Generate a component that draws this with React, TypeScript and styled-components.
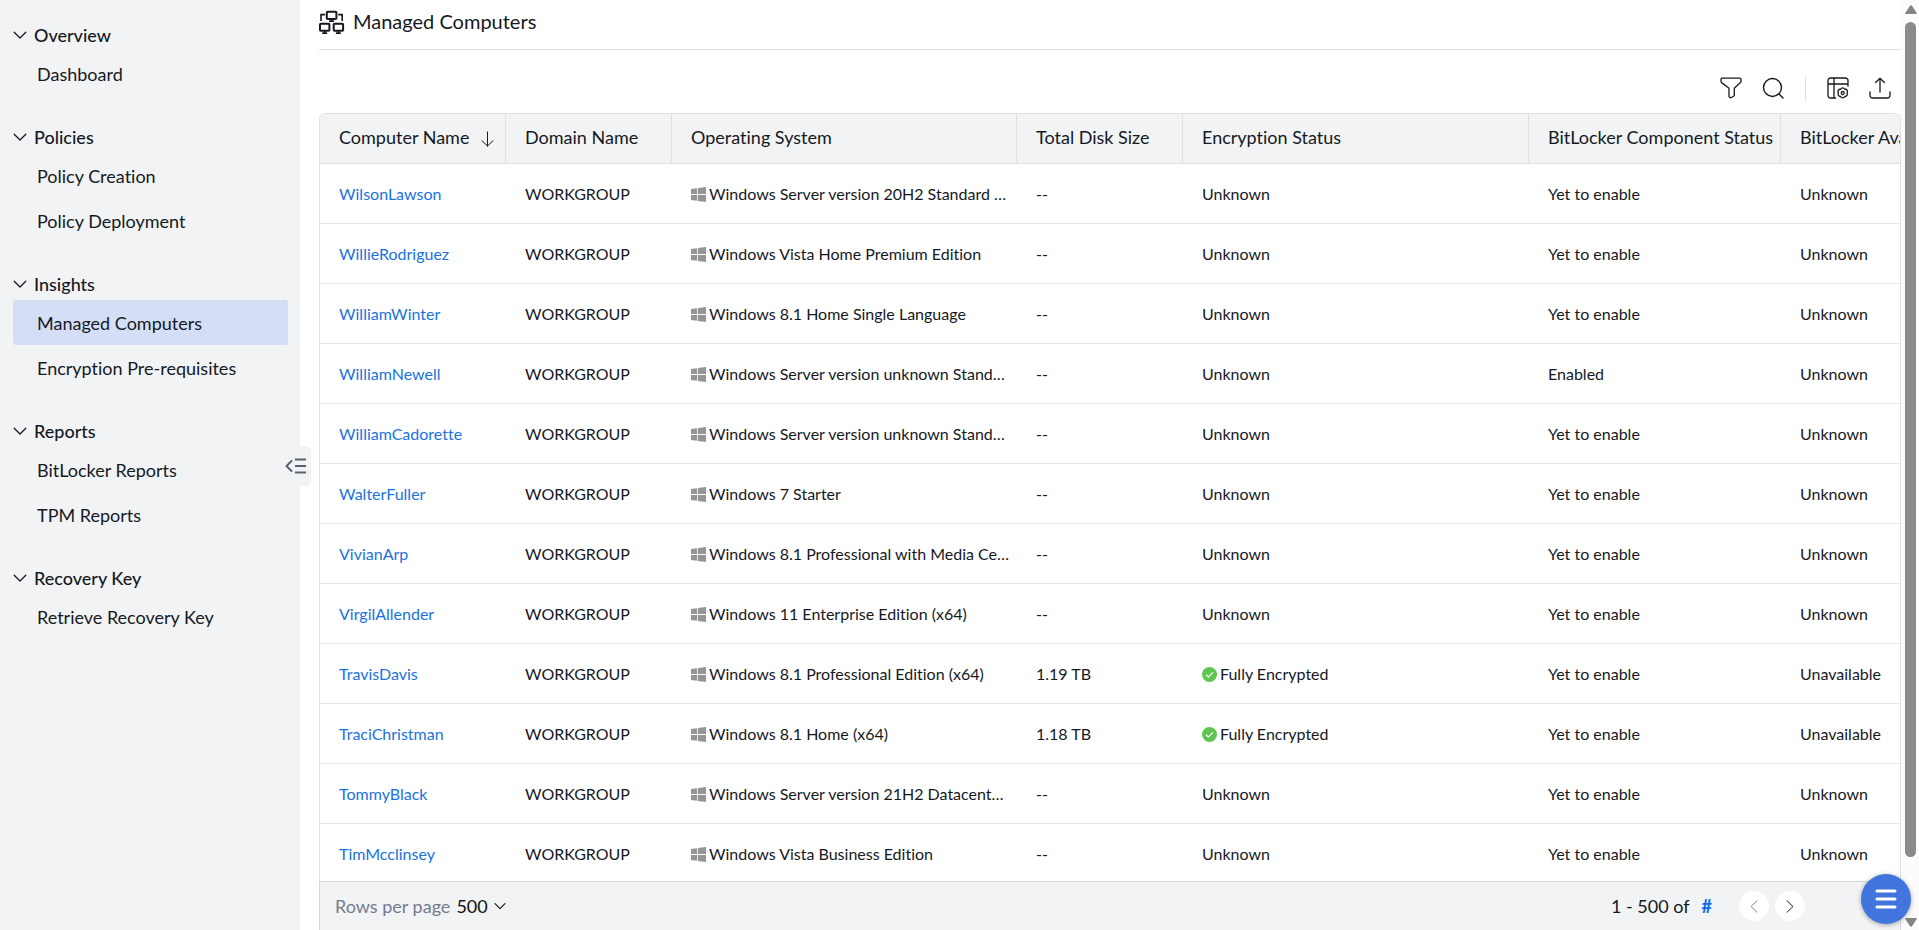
import React from "react";
import styled, { createGlobalStyle } from "styled-components";

const GlobalStyle = createGlobalStyle`
  *, *::before, *::after { box-sizing: border-box; }
  html, body, #root { height: 100%; }
  body {
    margin: 0;
    overflow: hidden;
    background: #fff;
    color: #16191f;
    font-family: Lato, "Open Sans", sans-serif;
    font-size: 18px;
    font-variant-ligatures: none;
    line-height: 24px;
  }
  a { color: inherit; text-decoration: none; }
  button, select { font: inherit; color: inherit; }
  svg { display: block; flex: none; }
`;

const Shell = styled.div`
  display: grid;
  grid-template-columns: 300px minmax(0, 1fr) 18px;
  height: 100vh;
  position: relative;
`;

/* Sidebar */

const Sidebar = styled.nav`
  position: relative;
  display: flex;
  flex-direction: column;
  gap: 24px;
  padding: 18px 12px 0 13px;
  background: #f1f3f5;
`;

const NavGroup = styled.section`
  display: flex;
  flex-direction: column;
`;

const NavHeading = styled.button`
  display: flex;
  align-items: center;
  gap: 7px;
  height: 33px;
  padding: 0;
  border: 0;
  background: none;
  font-weight: 500;
  text-align: left;
  cursor: pointer;
`;

const NavItem = styled.a<{ $active?: boolean }>`
  display: flex;
  align-items: center;
  height: 45px;
  padding-left: 24px;
  border-radius: 3px;
  background: ${(p) => (p.$active ? "#d4dff7" : "transparent")};
`;

const CollapseHandle = styled.button`
  position: absolute;
  top: 48%;
  right: -11px;
  display: flex;
  align-items: center;
  justify-content: center;
  width: 30px;
  height: 40px;
  padding: 0;
  border: 0;
  border-radius: 0 5px 5px 0;
  background: #f1f3f5;
  color: #5b6070;
  cursor: pointer;
`;

/* Main area */

const Main = styled.main`
  display: flex;
  flex-direction: column;
  min-width: 0;
  min-height: 0;
  padding-left: 19px;
`;

const TitleBar = styled.header`
  display: flex;
  flex: none;
  align-items: center;
  gap: 8px;
  height: 50px;
  padding-bottom: 6px;
  border-bottom: 1px solid #dfe1e4;
`;

const Title = styled.h1`
  margin: 0;
  padding-bottom: 2px;
  font-size: 20px;
  font-weight: 400;
  line-height: 24px;
`;

const Toolbar = styled.div`
  display: flex;
  flex: none;
  align-items: center;
  justify-content: flex-end;
  height: 63px;
  padding-top: 13px;
`;

const ToolButton = styled.button`
  display: grid;
  place-items: center;
  width: 42px;
  height: 32px;
  padding: 0;
  border: 0;
  background: none;
  cursor: pointer;
`;

const ToolDivider = styled.span`
  width: 1px;
  height: 25px;
  margin: 0 11px;
  background: #dcdfe3;
`;

const TableFrame = styled.div`
  flex: 1;
  min-height: 0;
  overflow: hidden;
  border: 1px solid #dfe2e5;
  border-bottom: 0;
  border-radius: 6px 6px 0 0;
`;

const Table = styled.table`
  width: 1741px;
  table-layout: fixed;
  border-collapse: separate;
  border-spacing: 0;
`;

const HeadCell = styled.th`
  height: 50px;
  padding: 0 0 3px 19px;
  border-right: 1px solid #dfe2e5;
  border-bottom: 1px solid #dfe2e5;
  background: #f1f3f5;
  font-weight: 400;
  text-align: left;
  white-space: nowrap;
`;

const HeadLabel = styled.span`
  display: flex;
  align-items: center;
  gap: 12px;
`;

const Cell = styled.td`
  height: 60px;
  padding: 0 7px 0 19px;
  border-bottom: 1px solid #e6e8ea;
  font-size: 16px;
`;

const CellContent = styled.span`
  display: flex;
  align-items: center;
  gap: 3px;
`;

const CellText = styled.span`
  overflow: hidden;
  text-overflow: ellipsis;
  white-space: nowrap;
`;

const ComputerLink = styled.a`
  color: #1a73e0;
`;

/* Footer */

const Footer = styled.footer`
  display: flex;
  flex: none;
  align-items: center;
  justify-content: space-between;
  height: 49px;
  padding: 0 95px 0 15px;
  border: 1px solid #d5d9dd;
  border-bottom: 0;
  background: #f1f3f5;
`;

const RowsPerPage = styled.label`
  display: flex;
  align-items: center;
  gap: 6px;
  color: #757b8c;
`;

const SelectWrap = styled.span`
  display: grid;
  align-items: center;
  color: #111;

  & > * { grid-area: 1 / 1; }
  & > svg { justify-self: end; pointer-events: none; }
`;

const PageSize = styled.select`
  width: 50px;
  padding: 0;
  border: 0;
  background: none;
  appearance: none;
`;

const Pager = styled.div`
  display: flex;
  align-items: center;
`;

const TotalLink = styled.a`
  margin: 0 27px 0 12px;
  color: #0b6bea;
  font-weight: 700;
`;

const PageButton = styled.button`
  display: grid;
  place-items: center;
  width: 30px;
  height: 30px;
  margin-right: 6px;
  padding: 0;
  border: 0;
  border-radius: 50%;
  background: #fff;
  color: #222;

  &:disabled { color: #858585; }
  &:last-child { margin-right: 0; }
`;

/* Window edge */

const ScrollTrack = styled.div`
  display: flex;
  flex-direction: column;
  align-items: center;
  gap: 8px;
  padding: 5px 0 3px 1px;
  background: #fcfcfc;
`;

const ScrollLane = styled.div`
  flex: 1;
  width: 11px;
`;

const ScrollThumb = styled.div`
  height: 94%;
  border-radius: 6px;
  background: #8b8b8b;
`;

const MenuButton = styled.button`
  position: absolute;
  right: 8px;
  bottom: 6px;
  display: grid;
  place-items: center;
  width: 50px;
  height: 50px;
  padding: 0;
  border: 0;
  border-radius: 50%;
  background: #4174dd;
  box-shadow: 0 1px 5px rgba(0, 0, 0, 0.35);
  cursor: pointer;
`;

/* Icons */

const stroke = { fill: "none", stroke: "currentColor", strokeLinecap: "round", strokeLinejoin: "round" } as const;

const ChevronDown = ({ size = 14 }: { size?: number }) => (
  <svg width={size} height={size} viewBox="0 0 14 14" {...stroke} strokeWidth="1.3">
    <path d="M1.2 4.2 7 10l5.8-5.8" />
  </svg>
);

const ComputersIcon = () => (
  <svg width="26" height="26" viewBox="0 0 26 26" {...stroke} strokeWidth="2">
    <rect x="7.800" y="2.700" width="9.600" height="7.300" rx=".8" />
    <rect x="1" y="14.700" width="9.400" height="7" rx=".8" />
    <rect x="14.700" y="14.700" width="9.400" height="7" rx=".8" />
    <path d="M12.600 10.500v1.500M10.800 12.200h3.600M5.700 22v2M3.900 24.200h3.600M19.400 22v2M17.600 24.200h3.600" strokeWidth="1.700" />
    <path d="M2 12V5.600h4M23.200 12V5.600h-4" strokeWidth="1.600" strokeLinecap="butt" strokeLinejoin="miter" />
  </svg>
);

const CollapseIcon = () => (
  <svg width="22" height="20" viewBox="0 0 22 20" {...stroke} strokeWidth="2">
    <path d="M6.500 5 1.500 10l5 5" />
    <path d="M10 3.500h11M10 10h11M10 16.500h11" strokeLinecap="butt" />
  </svg>
);

const FilterIcon = () => (
  <svg width="22" height="22" viewBox="0 0 22 22" {...stroke} strokeWidth="1.3">
    <path d="M2 1.200h18a1 1 0 0 1 1 1v2.300a1.500 1.500 0 0 1-.5 1.100l-5.700 5.100a1.500 1.500 0 0 0-.5 1.100v6.200a1.500 1.500 0 0 1-.8 1.300l-2.200 1.200a1.500 1.500 0 0 1-2.300-1.300v-7.400a1.500 1.500 0 0 0-.5-1.100L1.500 5.600A1.500 1.500 0 0 1 1 4.500V2.200a1 1 0 0 1 1-1z" />
  </svg>
);

const SearchIcon = () => (
  <svg width="22" height="22" viewBox="0 0 22 22" {...stroke} strokeWidth="1.4">
    <circle cx="10.500" cy="10.500" r="9" />
    <path d="m17 17 4 4" />
  </svg>
);

const ColumnsIcon = () => (
  <svg width="22" height="22" viewBox="0 0 22 22" {...stroke} strokeWidth="1.3">
    <path d="M8.500 21H3.500A2.500 2.500 0 0 1 1 18.500v-15A2.500 2.500 0 0 1 3.500 1h15A2.500 2.500 0 0 1 21 3.500V9M1 7h20M7 1v20" />
    <path d="M20 16a2.300 2.300 0 0 1-2.200 3.500 2.300 2.300 0 0 1-4.200 0A2.300 2.300 0 0 1 11.400 16a2.300 2.300 0 0 1 2.200-3.700 2.300 2.300 0 0 1 4.200 0A2.300 2.300 0 0 1 20 16z" />
    <circle cx="15.700" cy="16" r="1.500" />
  </svg>
);

const ExportIcon = () => (
  <svg width="22" height="22" viewBox="0 0 22 22" {...stroke} strokeWidth="1.3">
    <path d="M11 15V1.500M6.500 5.500 11 1.200l4.500 4.300M1 15v3.500A2.500 2.500 0 0 0 3.500 21h15a2.500 2.500 0 0 0 2.500-2.500V15" />
  </svg>
);

const SortIcon = () => (
  <svg width="13" height="20" viewBox="0 0 13 20" {...stroke} strokeWidth="1">
    <path d="M6.500 5v14M1 13.800 6.500 19l5.500-5.200" />
  </svg>
);

const WindowsIcon = () => (
  <svg width="15" height="17" viewBox="0 0 15 17" fill="#959595">
    <path d="M0 4.100 6 3.200v5.900H0zM6.800 3.100 15 2v7.100H6.800zM0 9.900h6v5.900l-6-.9zM6.800 9.900H15V17l-8.200-1.100z" />
  </svg>
);

const CheckIcon = () => (
  <svg width="15" height="17" viewBox="0 0 15 17">
    <circle cx="7.500" cy="9.500" r="7.500" fill="#5fc551" />
    <path d="m4 9.700 2.400 2.300L11 7.300" fill="none" stroke="#fff" strokeWidth="1.200" />
  </svg>
);

const PageChevron = ({ next }: { next?: boolean }) => (
  <svg width="8" height="13" viewBox="0 0 8 13" {...stroke} strokeWidth="1">
    <path d={next ? "m1 .8 6 5.700-6 5.700" : "M7 .8 1 6.500l6 5.700"} />
  </svg>
);

const ScrollArrow = ({ down }: { down?: boolean }) => (
  <svg width="12" height="9" viewBox="0 0 12 9" fill="#858585">
    <path d={down ? "M1 0h10q1.400 0 .6 1.200L7 8.200q-1 1.300-2 0L.4 1.200Q-.4 0 1 0z" : "M1 9h10q1.400 0 .6-1.200L7 .8q-1-1.300-2 0L.4 7.800Q-.4 9 1 9z"} />
  </svg>
);

const MenuIcon = () => (
  <svg width="22" height="20" viewBox="0 0 22 20" fill="none" stroke="#fff" strokeWidth="3" strokeLinecap="round">
    <path d="M2 2h18M2 10h18M2 18h18" />
  </svg>
);

/* Data */

const groups = [
  { title: "Overview", items: ["Dashboard"] },
  { title: "Policies", items: ["Policy Creation", "Policy Deployment"] },
  { title: "Insights", items: ["Managed Computers", "Encryption Pre-requisites"] },
  { title: "Reports", items: ["BitLocker Reports", "TPM Reports"] },
  { title: "Recovery Key", items: ["Retrieve Recovery Key"] },
];

const columns = [
  { label: "Computer Name", width: 186, sorted: true },
  { label: "Domain Name", width: 166 },
  { label: "Operating System", width: 345 },
  { label: "Total Disk Size", width: 166 },
  { label: "Encryption Status", width: 346 },
  { label: "BitLocker Component Status", width: 252 },
  { label: "BitLocker Availability", width: 280 },
];

interface Computer {
  name: string;
  os: string;
  disk?: string;
  component?: string;
}

const computers: Computer[] = [
  { name: "WilsonLawson", os: "Windows Server version 20H2 Standard Edition" },
  { name: "WillieRodriguez", os: "Windows Vista Home Premium Edition" },
  { name: "WilliamWinter", os: "Windows 8.1 Home Single Language" },
  { name: "WilliamNewell", os: "Windows Server version unknown Standard", component: "Enabled" },
  { name: "WilliamCadorette", os: "Windows Server version unknown Standard" },
  { name: "WalterFuller", os: "Windows 7 Starter" },
  { name: "VivianArp", os: "Windows 8.1 Professional with Media Center" },
  { name: "VirgilAllender", os: "Windows 11 Enterprise Edition (x64)" },
  { name: "TravisDavis", os: "Windows 8.1 Professional Edition (x64)", disk: "1.19 TB" },
  { name: "TraciChristman", os: "Windows 8.1 Home (x64)", disk: "1.18 TB" },
  { name: "TommyBlack", os: "Windows Server version 21H2 Datacenter Edition" },
  { name: "TimMcclinsey", os: "Windows Vista Business Edition" },
];

const ComputerRow = ({ computer }: { computer: Computer }) => (
  <tr>
    <Cell><ComputerLink href="#computer">{computer.name}</ComputerLink></Cell>
    <Cell>WORKGROUP</Cell>
    <Cell>
      <CellContent><WindowsIcon /><CellText>{computer.os}</CellText></CellContent>
    </Cell>
    <Cell>{computer.disk ?? "--"}</Cell>
    <Cell>
      <CellContent>
        {computer.disk && <CheckIcon />}
        <CellText>{computer.disk ? "Fully Encrypted" : "Unknown"}</CellText>
      </CellContent>
    </Cell>
    <Cell>{computer.component ?? "Yet to enable"}</Cell>
    <Cell>{computer.disk ? "Unavailable" : "Unknown"}</Cell>
  </tr>
);

export default function App() {
  return (
    <>
      <GlobalStyle />
      <Shell>
        <Sidebar>
          {groups.map((group) => (
            <NavGroup key={group.title}>
              <NavHeading type="button"><ChevronDown />{group.title}</NavHeading>
              {group.items.map((item) => (
                <NavItem key={item} href="#nav" $active={item === "Managed Computers"}>{item}</NavItem>
              ))}
            </NavGroup>
          ))}
          <CollapseHandle type="button" aria-label="Collapse menu"><CollapseIcon /></CollapseHandle>
        </Sidebar>

        <Main>
          <TitleBar>
            <ComputersIcon />
            <Title>Managed Computers</Title>
          </TitleBar>
          <Toolbar>
            <ToolButton type="button" aria-label="Filter"><FilterIcon /></ToolButton>
            <ToolButton type="button" aria-label="Search"><SearchIcon /></ToolButton>
            <ToolDivider />
            <ToolButton type="button" aria-label="Choose columns"><ColumnsIcon /></ToolButton>
            <ToolButton type="button" aria-label="Export"><ExportIcon /></ToolButton>
          </Toolbar>
          <TableFrame>
            <Table>
              <colgroup>
                {columns.map((c) => <col key={c.label} width={c.width} />)}
              </colgroup>
              <thead>
                <tr>
                  {columns.map((c) => (
                    <HeadCell key={c.label} scope="col">
                      <HeadLabel>{c.label}{c.sorted && <SortIcon />}</HeadLabel>
                    </HeadCell>
                  ))}
                </tr>
              </thead>
              <tbody>
                {computers.map((c) => <ComputerRow key={c.name} computer={c} />)}
              </tbody>
            </Table>
          </TableFrame>
          <Footer>
            <RowsPerPage>
              Rows per page
              <SelectWrap>
                <PageSize defaultValue="500">
                  <option>500</option>
                </PageSize>
                <ChevronDown size={12} />
              </SelectWrap>
            </RowsPerPage>
            <Pager>
              <span>1 - 500 of</span>
              <TotalLink href="#total">#</TotalLink>
              <PageButton type="button" aria-label="Previous page" disabled><PageChevron /></PageButton>
              <PageButton type="button" aria-label="Next page"><PageChevron next /></PageButton>
            </Pager>
          </Footer>
        </Main>

        <ScrollTrack>
          <ScrollArrow />
          <ScrollLane><ScrollThumb /></ScrollLane>
          <ScrollArrow down />
        </ScrollTrack>

        <MenuButton type="button" aria-label="Open menu"><MenuIcon /></MenuButton>
      </Shell>
    </>
  );
}
